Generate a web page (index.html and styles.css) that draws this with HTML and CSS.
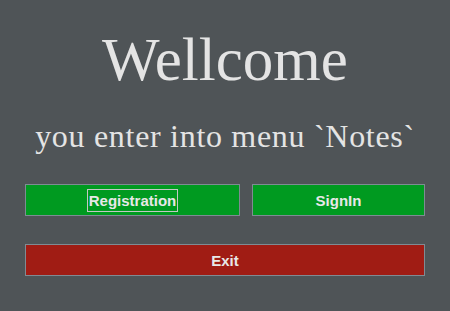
FILE: index.html
```html
<!DOCTYPE html>
<html lang="en">

<head>
    <meta charset="UTF-8">
    <meta name="viewport" content="width=device-width, initial-scale=1.0">
    <title>Notes</title>
    <link rel="stylesheet" href="styles.css">
</head>

<body>
    <div class="page">
        <h1 class="title">Wellcome</h1>
        <p class="subtitle">you enter into menu `Notes`</p>
        <div class="menu">
            <div class="menu-row">
                <button class="btn btn-green btn-wide"><span class="focus-ring">Registration</span></button>
                <button class="btn btn-green btn-narrow">SignIn</button>
            </div>
            <div class="menu-row">
                <button class="btn btn-red btn-full">Exit</button>
            </div>
        </div>
    </div>
</body>

</html>
```

FILE: styles.css
```css
html,
body {
    margin: 0;
    height: 100%;
    background: #4f5457;
}

.page {
    display: flex;
    flex-direction: column;
    align-items: center;
    padding-top: 30px;
}

.title {
    margin: 0;
    font-family: 'Liberation Serif', 'Times New Roman', serif;
    font-weight: normal;
    font-size: 61px;
    line-height: 60px;
    color: #e4e4e4;
}

.subtitle {
    margin: 31px 0 0 0;
    font-family: 'Liberation Serif', 'Times New Roman', serif;
    font-size: 32px;
    line-height: 30px;
    letter-spacing: 0.7px;
    color: #e4e4e4;
}

.menu {
    width: 400px;
    margin-top: 33px;
    display: flex;
    flex-direction: column;
    gap: 28px;
}

.menu-row {
    display: flex;
    gap: 12px;
}

.btn {
    height: 32px;
    margin: 0;
    padding: 1px 0 0 0;
    border: 1px solid #7f8b93;
    font-family: 'Liberation Sans', Arial, sans-serif;
    font-weight: bold;
    font-size: 15px;
    color: #e8e8e8;
    display: flex;
    align-items: center;
    justify-content: center;
}

.btn-green {
    background: #009a20;
}

.btn-red {
    background: #a01c14;
}

.btn-wide {
    width: 215px;
}

.btn-narrow {
    width: 173px;
}

.btn-full {
    width: 400px;
}

.focus-ring {
    border: 1px solid #c4c8c4;
    padding: 2px 1px;
    line-height: 17px;
}
```
